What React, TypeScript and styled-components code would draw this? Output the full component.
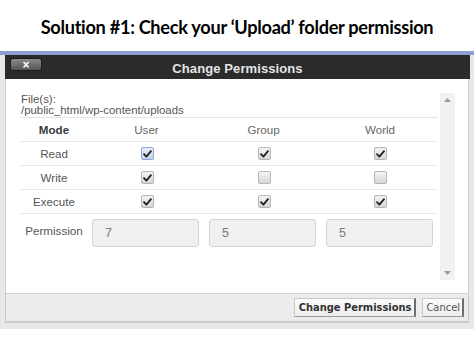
import React from "react";
import styled, { createGlobalStyle } from "styled-components";

const Global = createGlobalStyle`
  html, body { margin: 0; padding: 0; background: #ffffff; }
  body { font-family: "Liberation Sans", Arial, sans-serif; }
  * { box-sizing: border-box; }
`;

const Page = styled.div`
  width: 474px;
  height: 355px;
  display: flex;
  flex-direction: column;
  background: #ffffff;
  overflow: hidden;
`;

const Heading = styled.h1`
  margin: 0;
  height: 51px;
  display: flex;
  align-items: center;
  justify-content: center;
  padding-top: 3px;
  font-family: Lato, "Open Sans", sans-serif;
  font-weight: 700;
  font-size: 18.2px;
  letter-spacing: -0.3px;
  color: #000;
`;

const Frame = styled.div`
  border-top: 4px solid #8d9fcf;
  background: #e8e8e8;
  padding: 0 4px 6px 5px;
`;

const Dialog = styled.div`
  display: flex;
  flex-direction: column;
`;

const Header = styled.div`
  height: 24px;
  background: #2b2b2b;
  display: grid;
  grid-template-columns: 1fr auto 1fr;
  align-items: center;
`;

const CloseButton = styled.button`
  justify-self: start;
  align-self: start;
  margin: 3px 0 0 5px;
  width: 32px;
  height: 13px;
  border: 1px solid #1c1c1c;
  border-radius: 3px;
  background: linear-gradient(#8a8a8a, #555555);
  color: #ffffff;
  font-family: "Liberation Sans", Arial, sans-serif;
  font-weight: 700;
  font-size: 12px;
  line-height: 10px;
  padding: 0;
  display: flex;
  align-items: center;
  justify-content: center;
`;

const HeaderTitle = styled.div`
  font-family: "Liberation Sans", Arial, sans-serif;
  font-weight: 700;
  font-size: 13px;
  color: #e4e4e4;
  letter-spacing: 0.1px;
  padding-top: 2px;
`;

const Body = styled.div`
  height: 214px;
  background: #ffffff;
  border-left: 1px solid #cfcfcf;
  border-right: 1px solid #cfcfcf;
  margin-right: 1px;
  display: flex;
  padding: 0 13px 0 14px;
  gap: 2px;
`;

const Content = styled.div`
  flex: 1;
  padding-top: 15px;
  color: #555;
  font-size: 11.4px;
`;

const FileLine = styled.div`
  line-height: 11px;
  padding-left: 1px;
`;

const FileBlock = styled.div`
  padding-bottom: 1px;
  border-bottom: 1px solid #e4e4e4;
`;

const Row = styled.div<{ $tall?: boolean }>`
  display: grid;
  grid-template-columns: 68px 117px 117px 116px;
  height: ${(p) => (p.$tall ? "auto" : "24px")};
  border-bottom: ${(p) => (p.$tall ? "none" : "1px solid #e8e8e8")};
  align-items: ${(p) => (p.$tall ? "start" : "center")};
`;

const HeadCell = styled.div<{ $bold?: boolean }>`
  text-align: center;
  font-weight: ${(p) => (p.$bold ? 700 : 400)};
  color: ${(p) => (p.$bold ? "#3a3a3a" : "#666")};
  font-size: 11.6px;
`;

const Label = styled.div`
  text-align: center;
  color: #555;
  font-size: 11.6px;
`;

const Cell = styled.div`
  display: flex;
  justify-content: center;
`;

const Box = styled.span<{ $focus?: boolean }>`
  width: 13px;
  height: 13px;
  border-radius: 2px;
  border: 1px solid ${(p) => (p.$focus ? "#8fa7d6" : "#b5b5b5")};
  background: ${(p) =>
    p.$focus
      ? "linear-gradient(#e6ecf8, #c9d4ec)"
      : "linear-gradient(#f4f4f4, #d6d6d6)"};
  display: flex;
  align-items: center;
  justify-content: center;
  margin-left: 1px;
`;

const PermRow = styled(Row)`
  padding-top: 5px;
`;

const PermLabel = styled(Label)`
  padding-top: 5px;
`;

const ValueBox = styled.div`
  margin-left: 4px;
  width: 107px;
  height: 28px;
  border: 1px solid #d4d4d4;
  border-radius: 3px;
  background: #f0f0f0;
  color: #7a7a7a;
  font-size: 12.5px;
  display: flex;
  align-items: center;
  padding-left: 12px;
`;

const ScrollTrack = styled.div`
  width: 15px;
  margin: 14px 0 13px;
  background: #f1f1f1;
  display: flex;
  flex-direction: column;
  justify-content: space-between;
  align-items: center;
  padding: 5px 0 5px;
`;

const Footer = styled.div`
  height: 30px;
  background: #ececec;
  border-top: 1px solid #d2d2d2;
  border-left: 1px solid #c8c8c8;
  border-right: 1px solid #c8c8c8;
  border-bottom: 2px solid #cacaca;
  margin-right: 1px;
  display: flex;
  justify-content: flex-end;
  align-items: center;
  gap: 6px;
  padding: 0 4px 1px 0;
`;

const FooterButton = styled.button<{ $primary?: boolean }>`
  height: 19px;
  padding: ${(p) => (p.$primary ? "0 3px 0 4px" : "0 2px 0 3px")};
  background: linear-gradient(#fbfbfb, #ededed);
  border: 1px solid #c9c9c9;
  border-right: 2px solid #6d6d6d;
  border-bottom: 1px solid #9a9a9a;
  font-family: "DejaVu Sans Condensed", "DejaVu Sans", Verdana, sans-serif;
  font-stretch: condensed;
  font-weight: ${(p) => (p.$primary ? 700 : 400)};
  font-size: 11px;
  color: ${(p) => (p.$primary ? "#333" : "#555")};
`;

const Check = () => (
  <svg width="9" height="8" viewBox="0 0 9 8">
    <path
      d="M1 4.2 L3.4 6.6 L8 1.2"
      fill="none"
      stroke="#222"
      strokeWidth="1.8"
      strokeLinecap="round"
      strokeLinejoin="round"
    />
  </svg>
);

const Checkbox = ({ checked, focus }: { checked: boolean; focus?: boolean }) => (
  <Cell>
    <Box $focus={focus}>{checked && <Check />}</Box>
  </Cell>
);

const Arrow = ({ up }: { up?: boolean }) => (
  <svg width="7" height="4" viewBox="0 0 7 4">
    <path d={up ? "M0 4 L3.5 0 L7 4 Z" : "M0 0 L3.5 4 L7 0 Z"} fill="#9a9a9a" />
  </svg>
);

const rows: { label: string; vals: boolean[] }[] = [
  { label: "Read", vals: [true, true, true] },
  { label: "Write", vals: [true, false, false] },
  { label: "Execute", vals: [true, true, true] },
];

export default function App() {
  return (
    <Page>
      <Global />
      <Heading>Solution #1: Check your ‘Upload’ folder permission</Heading>
      <Frame>
        <Dialog>
          <Header>
            <CloseButton>×</CloseButton>
            <HeaderTitle>Change Permissions</HeaderTitle>
            <span />
          </Header>
          <Body>
            <Content>
              <FileBlock>
                <FileLine>File(s):</FileLine>
                <FileLine>/public_html/wp-content/uploads</FileLine>
              </FileBlock>
              <Row>
                <HeadCell $bold>Mode</HeadCell>
                <HeadCell>User</HeadCell>
                <HeadCell>Group</HeadCell>
                <HeadCell>World</HeadCell>
              </Row>
              {rows.map((r, i) => (
                <Row key={r.label}>
                  <Label>{r.label}</Label>
                  {r.vals.map((v, j) => (
                    <Checkbox key={j} checked={v} focus={i === 0 && j === 0} />
                  ))}
                </Row>
              ))}
              <PermRow $tall>
                <PermLabel>Permission</PermLabel>
                <ValueBox>7</ValueBox>
                <ValueBox>5</ValueBox>
                <ValueBox>5</ValueBox>
              </PermRow>
            </Content>
            <ScrollTrack>
              <Arrow up />
              <Arrow />
            </ScrollTrack>
          </Body>
          <Footer>
            <FooterButton $primary>Change Permissions</FooterButton>
            <FooterButton>Cancel</FooterButton>
          </Footer>
        </Dialog>
      </Frame>
    </Page>
  );
}
